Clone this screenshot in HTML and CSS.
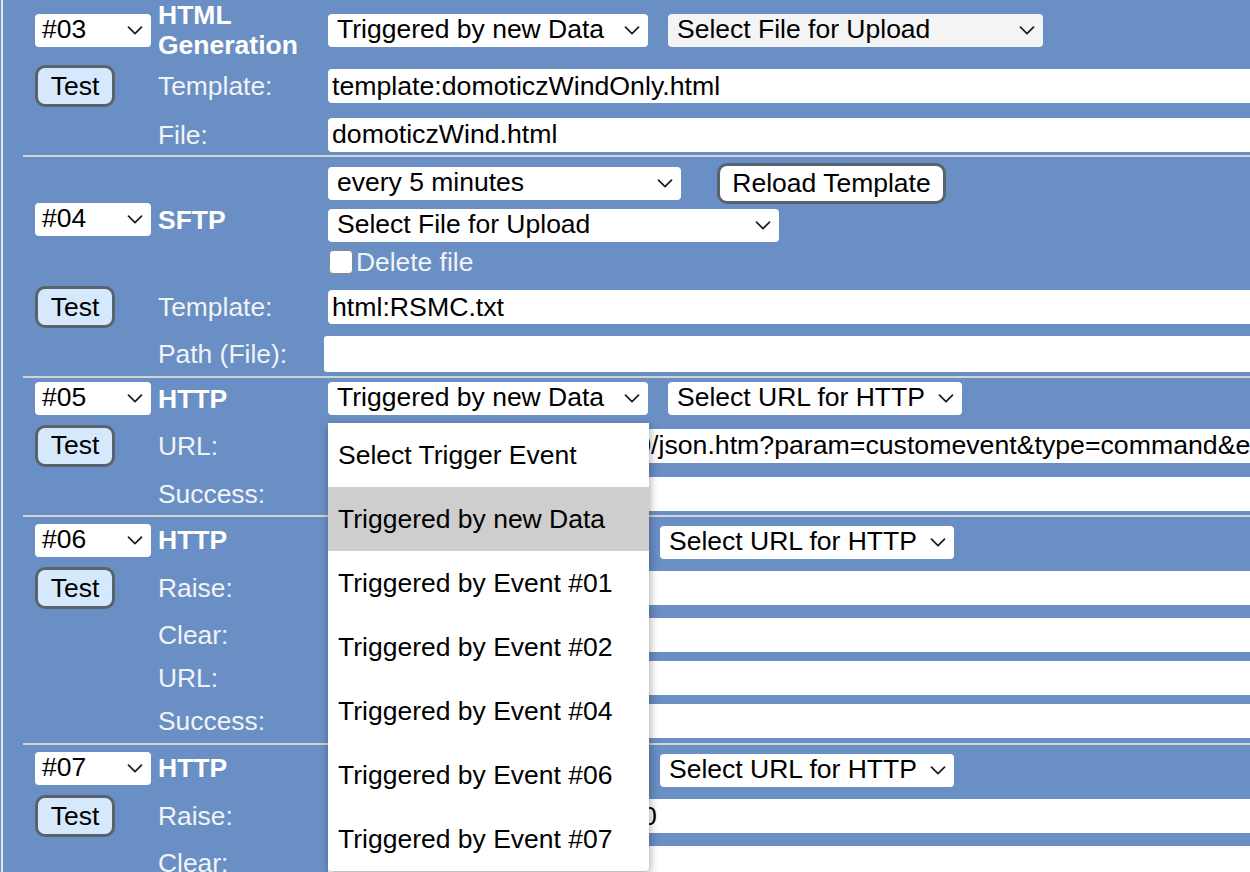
FILE: index.html
```html
<!DOCTYPE html>
<html lang="en">
<head>
<meta charset="utf-8">
<title>Upload Settings</title>
<link rel="stylesheet" href="styles.css">
</head>
<body>
<div class="page">

  <section class="group first">
    <div class="row h58">
      <div class="c1"><div class="sel num">#03<svg class="chev" width="16" height="9" viewBox="0 0 16 9"><path d="M1.5 1.2 L8 7.6 L14.5 1.2"/></svg></div></div>
      <div class="title">HTML Generation</div>
      <div class="c3">
        <div class="sel trig">Triggered by new Data<svg class="chev" width="16" height="9" viewBox="0 0 16 9"><path d="M1.5 1.2 L8 7.6 L14.5 1.2"/></svg></div>
        <div class="sel upload dim">Select File for Upload<svg class="chev" width="16" height="9" viewBox="0 0 16 9"><path d="M1.5 1.2 L8 7.6 L14.5 1.2"/></svg></div>
      </div>
    </div>
    <div class="row h56">
      <div class="c1"><button class="test">Test</button></div>
      <div class="lbl">Template:</div>
      <div class="c3"><input class="field" type="text" value="template:domoticzWindOnly.html"></div>
    </div>
    <div class="row h41">
      <div class="c1"></div>
      <div class="lbl">File:</div>
      <div class="c3"><input class="field" type="text" value="domoticzWind.html"></div>
    </div>
  </section>

  <section class="group">
    <div class="row h125">
      <div class="c1"><div class="sel num">#04<svg class="chev" width="16" height="9" viewBox="0 0 16 9"><path d="M1.5 1.2 L8 7.6 L14.5 1.2"/></svg></div></div>
      <div class="title">SFTP</div>
      <div class="c3 stack">
        <div class="line">
          <div class="sel every">every 5 minutes<svg class="chev" width="16" height="9" viewBox="0 0 16 9"><path d="M1.5 1.2 L8 7.6 L14.5 1.2"/></svg></div>
          <button class="reload">Reload Template</button>
        </div>
        <div class="sel upload2">Select File for Upload<svg class="chev" width="16" height="9" viewBox="0 0 16 9"><path d="M1.5 1.2 L8 7.6 L14.5 1.2"/></svg></div>
        <label class="check"><span class="box"></span>Delete file</label>
      </div>
    </div>
    <div class="row h50">
      <div class="c1"><button class="test">Test</button></div>
      <div class="lbl">Template:</div>
      <div class="c3"><input class="field" type="text" value="html:RSMC.txt"></div>
    </div>
    <div class="row h44">
      <div class="c1"></div>
      <div class="lbl">Path (File):</div>
      <div class="c3"><input class="field path" type="text" value=""></div>
    </div>
  </section>

  <section class="group">
    <div class="row h41">
      <div class="c1"><div class="sel num">#05<svg class="chev" width="16" height="9" viewBox="0 0 16 9"><path d="M1.5 1.2 L8 7.6 L14.5 1.2"/></svg></div></div>
      <div class="title">HTTP</div>
      <div class="c3">
        <div class="anchor">
          <div class="sel trig">Triggered by new Data<svg class="chev" width="16" height="9" viewBox="0 0 16 9"><path d="M1.5 1.2 L8 7.6 L14.5 1.2"/></svg></div>
          <div class="menu">
            <div class="opt">Select Trigger Event</div>
            <div class="opt hl">Triggered by new Data</div>
            <div class="opt">Triggered by Event #01</div>
            <div class="opt">Triggered by Event #02</div>
            <div class="opt">Triggered by Event #04</div>
            <div class="opt">Triggered by Event #06</div>
            <div class="opt">Triggered by Event #07</div>
          </div>
        </div>
        <div class="sel url">Select URL for HTTP<svg class="chev" width="16" height="9" viewBox="0 0 16 9"><path d="M1.5 1.2 L8 7.6 L14.5 1.2"/></svg></div>
      </div>
    </div>
    <div class="row h53">
      <div class="c1"><button class="test">Test</button></div>
      <div class="lbl">URL:</div>
      <div class="c3"><input class="field" type="text" value="http://192.168.178.20:8080/json.htm?param=customevent&amp;type=command&amp;event=wind"></div>
    </div>
    <div class="row h43">
      <div class="c1"></div>
      <div class="lbl">Success:</div>
      <div class="c3"><input class="field" type="text" value=""></div>
    </div>
  </section>

  <section class="group">
    <div class="row h46">
      <div class="c1"><div class="sel num">#06<svg class="chev" width="16" height="9" viewBox="0 0 16 9"><path d="M1.5 1.2 L8 7.6 L14.5 1.2"/></svg></div></div>
      <div class="title">HTTP</div>
      <div class="c3">
        <div class="sel trig narrow">Triggered by Event #04<svg class="chev" width="16" height="9" viewBox="0 0 16 9"><path d="M1.5 1.2 L8 7.6 L14.5 1.2"/></svg></div>
        <div class="sel url low">Select URL for HTTP<svg class="chev" width="16" height="9" viewBox="0 0 16 9"><path d="M1.5 1.2 L8 7.6 L14.5 1.2"/></svg></div>
      </div>
    </div>
    <div class="row h50">
      <div class="c1"><button class="test">Test</button></div>
      <div class="lbl">Raise:</div>
      <div class="c3"><input class="field" type="text" value="WindGust &gt; 50"></div>
    </div>
    <div class="row h44">
      <div class="c1"></div>
      <div class="lbl">Clear:</div>
      <div class="c3"><input class="field" type="text" value="WindGust &lt; 40"></div>
    </div>
    <div class="row h42">
      <div class="c1"></div>
      <div class="lbl">URL:</div>
      <div class="c3"><input class="field" type="text" value="http://192.168.178.2:8080/"></div>
    </div>
    <div class="row h44">
      <div class="c1"></div>
      <div class="lbl">Success:</div>
      <div class="c3"><input class="field" type="text" value=""></div>
    </div>
  </section>

  <section class="group">
    <div class="row h46">
      <div class="c1"><div class="sel num">#07<svg class="chev" width="16" height="9" viewBox="0 0 16 9"><path d="M1.5 1.2 L8 7.6 L14.5 1.2"/></svg></div></div>
      <div class="title">HTTP</div>
      <div class="c3">
        <div class="sel trig narrow">Triggered by Event #06<svg class="chev" width="16" height="9" viewBox="0 0 16 9"><path d="M1.5 1.2 L8 7.6 L14.5 1.2"/></svg></div>
        <div class="sel url low">Select URL for HTTP<svg class="chev" width="16" height="9" viewBox="0 0 16 9"><path d="M1.5 1.2 L8 7.6 L14.5 1.2"/></svg></div>
      </div>
    </div>
    <div class="row h50">
      <div class="c1"><button class="test">Test</button></div>
      <div class="lbl">Raise:</div>
      <div class="c3"><input class="field" type="text" value="%windspeed-kmh% &gt;= 100"></div>
    </div>
    <div class="row h44">
      <div class="c1"></div>
      <div class="lbl">Clear:</div>
      <div class="c3"><input class="field" type="text" value=""></div>
    </div>
  </section>

</div>
</body>
</html>
```
FILE: styles.css
```css
html, body {
  margin: 0;
  padding: 0;
}
body {
  background: #6a8fc4;
  font-family: "Liberation Sans", Arial, sans-serif;
  color: #000;
  width: 1250px;
  height: 872px;
  overflow: hidden;
}
.page {
  margin-left: 1px;
  border-left: 2px solid #e3e8f0;
  padding-left: 20px;
  min-height: 872px;
}
.group {
  border-top: 2px solid #d3d3d3;
  padding-left: 12px;
}
.group.first {
  border-top: none;
}
.row {
  display: grid;
  grid-template-columns: 123px 170px 1fr;
  align-items: center;
}
.h41 { height: 41px; }
.h42 { height: 42px; }
.h43 { height: 43px; }
.h44 { height: 44px; }
.h46 { height: 46px; }
.h50 { height: 50px; }
.h53 { height: 53px; }
.h56 { height: 56px; }
.h58 { height: 58px; }
.h125 { height: 125px; }

.c1 {
  display: flex;
  align-items: center;
}
.c3 {
  display: flex;
  align-items: center;
  gap: 20px;
  min-width: 0;
  white-space: nowrap;
}
.lbl {
  color: #f1f3f7;
  font-size: 26.4px;
  line-height: 30px;
  white-space: nowrap;
}
.title {
  color: #fff;
  font-size: 26.5px;
  font-weight: bold;
  line-height: 30px;
}

.sel {
  display: flex;
  align-items: center;
  justify-content: space-between;
  box-sizing: border-box;
  height: 33px;
  padding: 0 8px 2px 9px;
  background: #fff;
  border-radius: 4px;
  font-size: 26.5px;
  line-height: 31px;
  color: #000;
  white-space: nowrap;
  flex: none;
}
.chev {
  flex: none;
  margin-top: 2px;
}
.chev path {
  fill: none;
  stroke: #1c1c1c;
  stroke-width: 1.7;
  stroke-linecap: round;
  stroke-linejoin: round;
}
.num { width: 116px; padding-left: 7px; }
.trig { width: 320px; }
.trig.narrow { width: 312px; }
.upload { width: 375px; }
.dim { background: #f4f4f4; }
.every { width: 353px; }
.upload2 { width: 451px; }
.url { width: 294px; }
.low { margin-top: 4px; }

.field {
  flex: none;
  width: 1100px;
  height: 34px;
  box-sizing: border-box;
  border: none;
  border-radius: 4px 0 0 4px;
  padding: 0 0 0 4px;
  margin: 0;
  background: #fff;
  color: #000;
  font-family: "Liberation Sans", Arial, sans-serif;
  font-size: 26.7px;
  outline: none;
}
.field.path {
  height: 36px;
  margin-left: -4px;
  border-radius: 3px 0 0 3px;
}

.test {
  width: 80px;
  height: 42px;
  box-sizing: border-box;
  border: 3px solid #5a626d;
  border-radius: 10px;
  background: #d6e8fc;
  color: #000;
  font-family: "Liberation Sans", Arial, sans-serif;
  font-size: 26.5px;
  padding: 0;
}
.reload {
  width: 229px;
  height: 41px;
  box-sizing: border-box;
  border: 3px solid #5a626d;
  border-radius: 10px;
  background: #fff;
  color: #000;
  font-family: "Liberation Sans", Arial, sans-serif;
  font-size: 26.5px;
  padding: 0;
}

.stack {
  flex-direction: column;
  align-items: flex-start;
  align-self: start;
  padding-top: 6px;
  gap: 5px;
}
.line {
  display: flex;
  align-items: center;
  gap: 36px;
  height: 41px;
}
.check {
  display: flex;
  align-items: center;
  gap: 3px;
  margin-top: 1px;
  color: #f1f3f7;
  font-size: 26.4px;
  line-height: 28px;
}
.box {
  width: 24px;
  height: 24px;
  box-sizing: border-box;
  background: #fff;
  border: 1px solid #8a8a8a;
  border-radius: 4px;
  margin-left: 1px;
}

.anchor {
  position: relative;
  flex: none;
}
.menu {
  position: absolute;
  left: 0;
  top: 41px;
  width: 321px;
  background: #fff;
  box-shadow: 1px 3px 8px rgba(0, 0, 0, 0.35);
  border-radius: 0 0 4px 4px;
  z-index: 10;
}
.opt {
  height: 64px;
  line-height: 64px;
  padding-left: 10px;
  font-size: 26.5px;
  color: #000;
}
.opt.hl {
  background: #cecece;
}
```
